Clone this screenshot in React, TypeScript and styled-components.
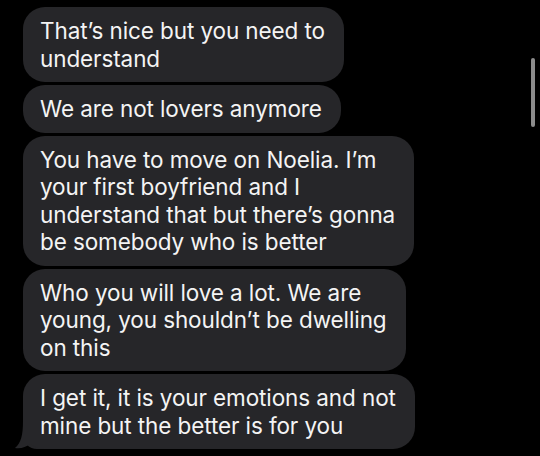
import styled, { createGlobalStyle } from 'styled-components'

const GlobalStyle = createGlobalStyle`
  html, body {
    margin: 0;
    padding: 0;
    background: #000;
  }
`

const messages: string[][] = [
  ['That’s nice but you need to', 'understand'],
  ['We are not lovers anymore'],
  [
    'You have to move on Noelia. I’m',
    'your first boyfriend and I',
    'understand that but there’s gonna',
    'be somebody who is better',
  ],
  ['Who you will love a lot. We are', 'young, you shouldn’t be dwelling', 'on this'],
  ['I get it, it is your emotions and not', 'mine but the better is for you'],
]

export default function App() {
  return (
    <>
      <GlobalStyle />
      <Screen>
        <Thread>
          {messages.map((lines, i) => {
            const last = i === messages.length - 1
            return (
              <Bubble key={i} $tail={last}>
                {last && (
                  <Tail width="30" height="30" viewBox="0 0 30 30">
                    <path d="M8 2 C8 16 6 24 0 29 C6 30 11 28 15 25 C19 28 24 30 30 30 L30 2 Z" />
                  </Tail>
                )}
                {lines.map((line) => (
                  <Line key={line}>{line}</Line>
                ))}
              </Bubble>
            )
          })}
        </Thread>
        <ScrollThumb />
      </Screen>
    </>
  )
}

const Screen = styled.div`
  position: relative;
  width: 540px;
  height: 456px;
  background: #000;
  overflow: hidden;
`
const Thread = styled.div`
  display: flex;
  flex-direction: column;
  align-items: flex-start;
  gap: 3px;
  padding: 7px 0 0 23px;
`
const Bubble = styled.div<{ $tail?: boolean }>`
  position: relative;
  padding: 10px 19px 10px 17px;
  background: #262629;
  border-radius: 22px;
  ${({ $tail }) => ($tail ? 'border-bottom-left-radius: 14px;' : '')}
  color: #f4f4f4;
  font-family: Inter, 'Noto Sans', sans-serif;
  font-size: 22.5px;
  line-height: 27.5px;
  letter-spacing: -0.1px;
`
const Line = styled.span`
  position: relative;
  display: block;
  white-space: nowrap;
`
const Tail = styled.svg`
  position: absolute;
  left: -8px;
  bottom: 0;
  fill: #262629;
`
const ScrollThumb = styled.div`
  position: absolute;
  left: 531px;
  top: 58px;
  width: 4px;
  height: 69px;
  border-radius: 2px;
  background: #8c8c8c;
`
